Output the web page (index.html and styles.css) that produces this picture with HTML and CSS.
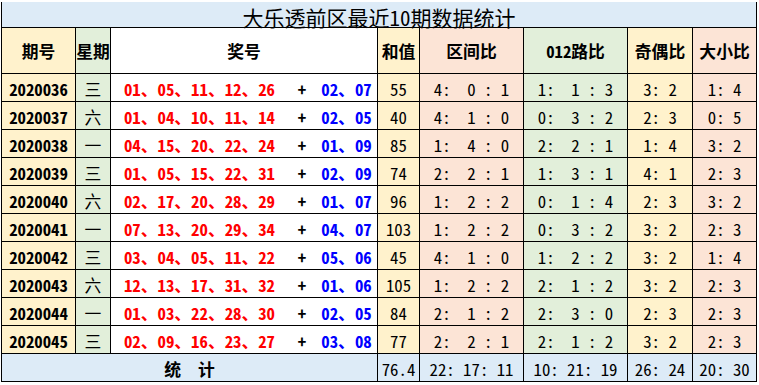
FILE: index.html
```html
<!DOCTYPE html>
<html lang="zh-CN">
<head>
<meta charset="utf-8">
<title>大乐透前区最近10期数据统计</title>
<link rel="stylesheet" href="styles.css">
</head>
<body>
<table class="stats">
  <colgroup>
    <col class="w-issue"><col class="w-week"><col class="w-red"><col class="w-plus"><col class="w-blue"><col class="w-sum"><col class="w-zone"><col class="w-road"><col class="w-odd"><col class="w-size">
  </colgroup>
  <tr class="title-row"><td colspan="10" class="title">大乐透前区最近10期数据统计</td></tr>
  <tr class="head-row">
    <th class="issue">期号</th><th class="week">星期</th><th colspan="3" class="prize">奖号</th><th class="sum">和值</th><th class="zone">区间比</th><th class="road">012路比</th><th class="odd">奇偶比</th><th class="size">大小比</th>
  </tr>
  <tr class="draw"><td class="issue">2020036</td><td class="week">三</td><td class="red">01、05、11、12、26</td><td class="plus">+</td><td class="blue">02、07</td><td class="sum">55</td><td class="zone">4:  0 : 1</td><td class="road">1:  1 : 3</td><td class="odd">3: 2</td><td class="size">1: 4</td></tr>
  <tr class="draw"><td class="issue">2020037</td><td class="week">六</td><td class="red">01、04、10、11、14</td><td class="plus">+</td><td class="blue">02、05</td><td class="sum">40</td><td class="zone">4:  1 : 0</td><td class="road">0:  3 : 2</td><td class="odd">2: 3</td><td class="size">0: 5</td></tr>
  <tr class="draw"><td class="issue">2020038</td><td class="week">一</td><td class="red">04、15、20、22、24</td><td class="plus">+</td><td class="blue">01、09</td><td class="sum">85</td><td class="zone">1:  4 : 0</td><td class="road">2:  2 : 1</td><td class="odd">1: 4</td><td class="size">3: 2</td></tr>
  <tr class="draw"><td class="issue">2020039</td><td class="week">三</td><td class="red">01、05、15、22、31</td><td class="plus">+</td><td class="blue">02、09</td><td class="sum">74</td><td class="zone">2:  2 : 1</td><td class="road">1:  3 : 1</td><td class="odd">4: 1</td><td class="size">2: 3</td></tr>
  <tr class="draw"><td class="issue">2020040</td><td class="week">六</td><td class="red">02、17、20、28、29</td><td class="plus">+</td><td class="blue">01、07</td><td class="sum">96</td><td class="zone">1:  2 : 2</td><td class="road">0:  1 : 4</td><td class="odd">2: 3</td><td class="size">3: 2</td></tr>
  <tr class="draw"><td class="issue">2020041</td><td class="week">一</td><td class="red">07、13、20、29、34</td><td class="plus">+</td><td class="blue">04、07</td><td class="sum">103</td><td class="zone">1:  2 : 2</td><td class="road">0:  3 : 2</td><td class="odd">3: 2</td><td class="size">2: 3</td></tr>
  <tr class="draw"><td class="issue">2020042</td><td class="week">三</td><td class="red">03、04、05、11、22</td><td class="plus">+</td><td class="blue">05、06</td><td class="sum">45</td><td class="zone">4:  1 : 0</td><td class="road">1:  2 : 2</td><td class="odd">3: 2</td><td class="size">1: 4</td></tr>
  <tr class="draw"><td class="issue">2020043</td><td class="week">六</td><td class="red">12、13、17、31、32</td><td class="plus">+</td><td class="blue">01、06</td><td class="sum">105</td><td class="zone">1:  2 : 2</td><td class="road">2:  1 : 2</td><td class="odd">3: 2</td><td class="size">2: 3</td></tr>
  <tr class="draw"><td class="issue">2020044</td><td class="week">一</td><td class="red">01、03、22、28、30</td><td class="plus">+</td><td class="blue">02、05</td><td class="sum">84</td><td class="zone">2:  1 : 2</td><td class="road">2:  3 : 0</td><td class="odd">2: 3</td><td class="size">2: 3</td></tr>
  <tr class="draw"><td class="issue">2020045</td><td class="week">三</td><td class="red">02、09、16、23、27</td><td class="plus">+</td><td class="blue">03、08</td><td class="sum">77</td><td class="zone">2:  2 : 1</td><td class="road">2:  1 : 2</td><td class="odd">3: 2</td><td class="size">2: 3</td></tr>
  <tr class="total-row"><td colspan="5" class="label">统　计</td><td>76.4</td><td>22: 17: 11</td><td>10: 21: 19</td><td>26: 24</td><td>20: 30</td></tr>
</table>
</body>
</html>
```

FILE: styles.css
```css
html, body {
  margin: 0;
  padding: 0;
  background: #ffffff;
}

body {
  font-family: "Noto Sans Mono CJK SC", "Noto Sans CJK SC", sans-serif;
  color: #000000;
}

.stats {
  margin: 2px 0 0 1px;
  border-collapse: separate;
  border-spacing: 0;
  table-layout: fixed;
  width: 756px;
  border-left: 1px solid #000;
}

.w-issue { width: 74px; }
.w-week { width: 35px; }
.w-red { width: 177px; }
.w-plus { width: 28px; }
.w-blue { width: 62px; }
.w-sum { width: 42px; }
.w-zone { width: 104px; }
.w-road { width: 104px; }
.w-odd { width: 65px; }
.w-size { width: 64px; }

.stats td,
.stats th {
  box-sizing: border-box;
  padding: 0;
  border-right: 1px solid #000;
  border-bottom: 1px solid #000;
  text-align: center;
  vertical-align: middle;
  white-space: pre;
  line-height: 20px;
  font-size: 16.8px;
}

.title-row { height: 26px; }
.head-row { height: 46px; }
.draw { height: 28px; }
.total-row { height: 28px; }

.stats .title {
  background: #ddebf7;
  font-size: 21px;
  font-weight: 400;
  line-height: 18px;
  vertical-align: bottom;
  padding: 0 0 1px 0;
}

.head-row th {
  font-weight: 700;
}

.issue { background: #fff2cc; }
.week { background: #e2efda; }
.prize { background: #ffffff; }
.sum { background: #fff2cc; }
.zone { background: #fce4d6; }
.road { background: #e2efda; }
.odd { background: #fff2cc; }
.size { background: #fce4d6; }

.stats .draw td {
  padding-top: 2px;
}

.draw .issue { font-weight: 700; }

.stats .draw .red,
.stats .draw .plus {
  border-right: none;
  font-weight: 700;
}

.draw .red { color: #ff0000; }
.draw .plus { color: #000; }
.draw .blue { color: #0000ff; font-weight: 700; }

.stats .total-row td {
  background: #ddebf7;
  padding-top: 2px;
}

.total-row .label {
  font-weight: 700;
}
```
